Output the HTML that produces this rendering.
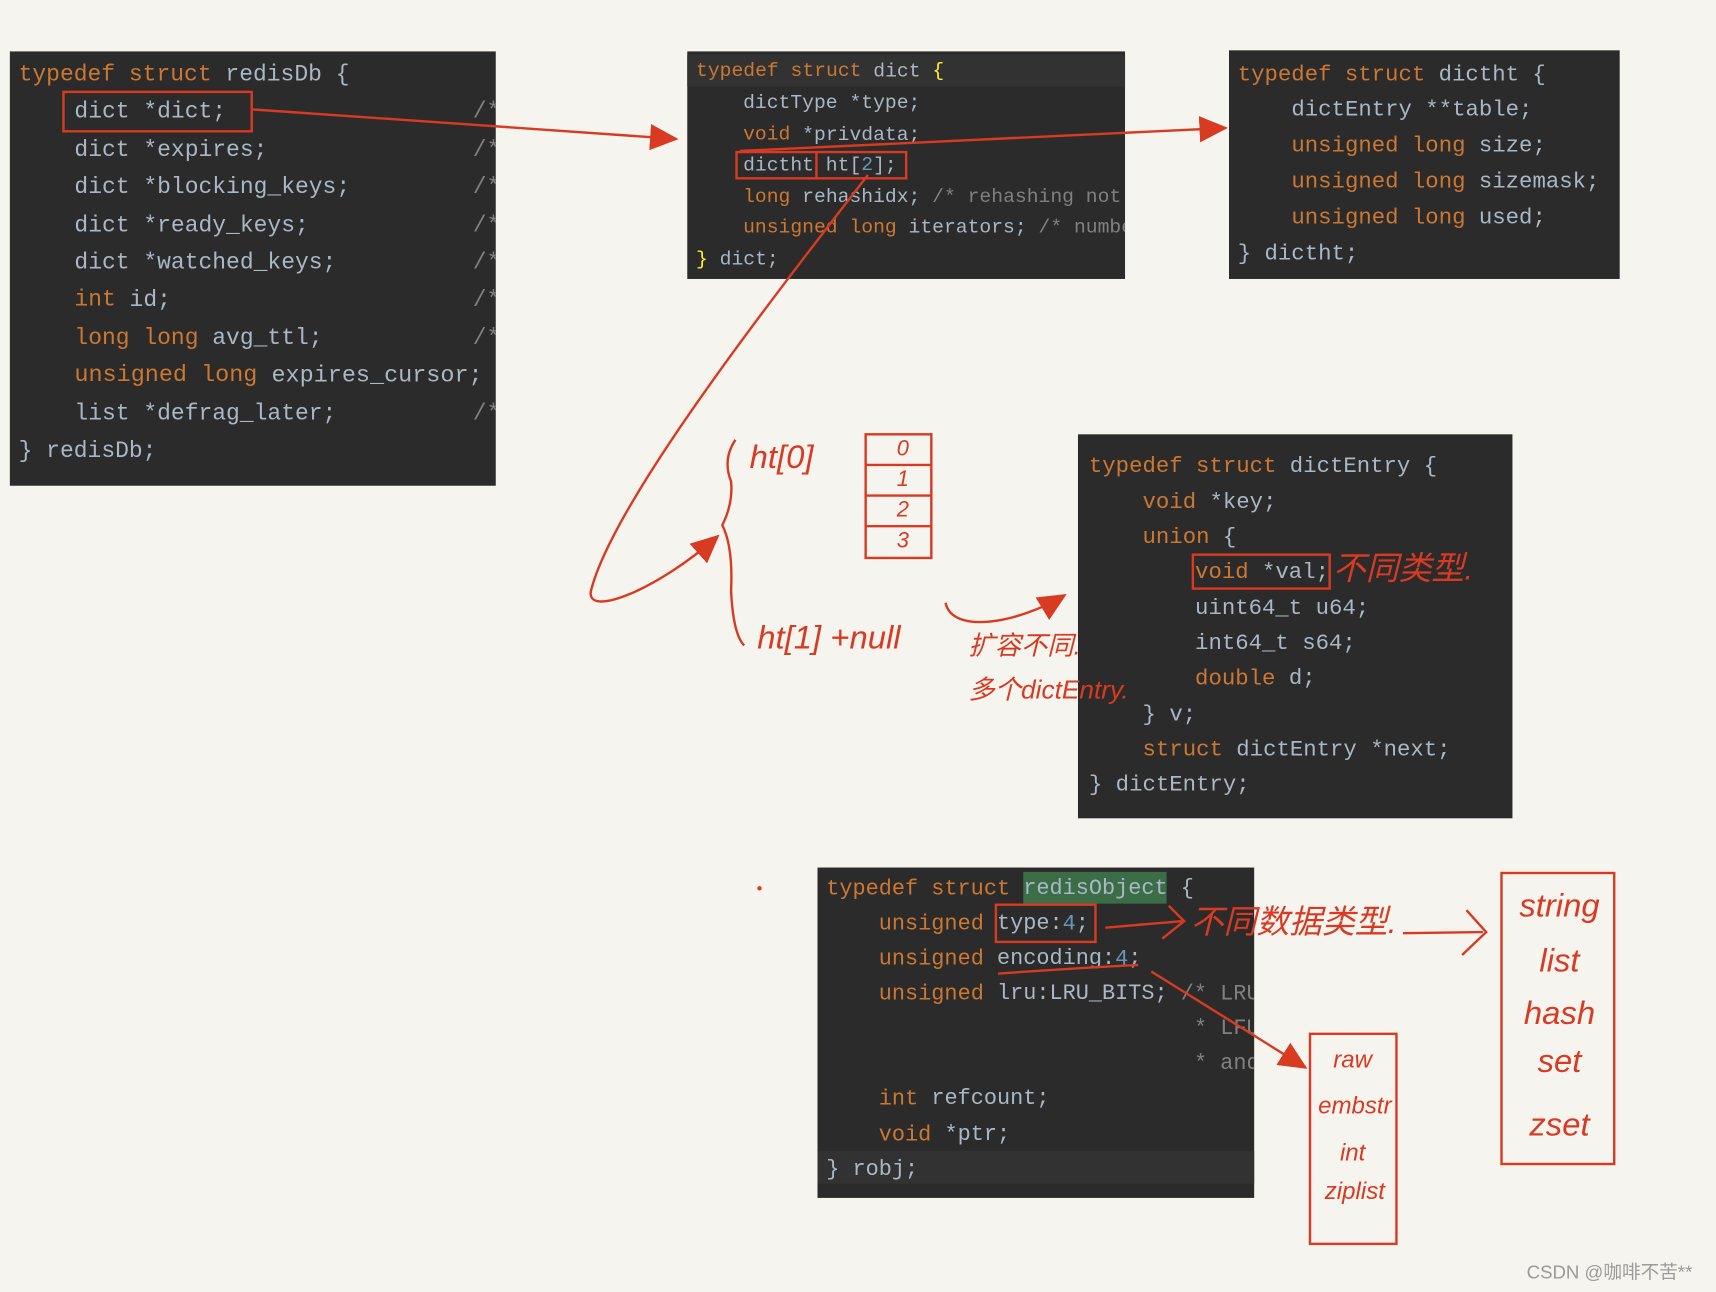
<!DOCTYPE html>
<html><head><meta charset="utf-8"><style>
html,body{margin:0;padding:0;background:#f6f4ef;}
svg{display:block}
.c{font-family:"Liberation Mono",monospace;fill:#a9b7c6;dominant-baseline:middle}
.k{fill:#cc7832}.m{fill:#808080}.n{fill:#6897bb}.y{fill:#ffef28}
.h{font-family:"Liberation Sans","Noto Sans CJK SC",sans-serif;fill:#d83a22;dominant-baseline:middle;font-style:italic}
.r{fill:none;stroke:#d83a22;stroke-width:2.2}
</style></head><body>
<svg width="1716" height="1292" viewBox="0 0 1568 1181" preserveAspectRatio="none" xmlns="http://www.w3.org/2000/svg">
<rect width="1568" height="1181" fill="#f6f4ef"/>
<defs>
<marker id="b" markerWidth="26" markerHeight="24" refX="24" refY="12" orient="auto" markerUnits="userSpaceOnUse"><path d="M0,0 L26,12 L0,24 z" fill="#d83a22"/></marker>
<clipPath id="cd"><rect x="628" y="47" width="400" height="208"/></clipPath>
<clipPath id="co"><rect x="747" y="793" width="399" height="302"/></clipPath>
<clipPath id="cr"><rect x="9" y="47" width="444" height="397"/></clipPath>
</defs>

<!-- redisDb -->
<rect x="9" y="47" width="444" height="397" fill="#2b2b2b"/>
<g class="c" font-size="21" clip-path="url(#cr)">
<text x="17" y="68"><tspan class="k">typedef struct</tspan> redisDb {</text>
<text x="68" y="102">dict *dict;</text>
<text x="68" y="137">dict *expires;</text>
<text x="68" y="171">dict *blocking_keys;</text>
<text x="68" y="206">dict *ready_keys;</text>
<text x="68" y="240">dict *watched_keys;</text>
<text x="68" y="274"><tspan class="k">int</tspan> id;</text>
<text x="68" y="309"><tspan class="k">long long</tspan> avg_ttl;</text>
<text x="68" y="343" textLength="373" lengthAdjust="spacingAndGlyphs"><tspan class="k">unsigned long</tspan> expires_cursor;</text>
<text x="68" y="378">list *defrag_later;</text>
<text x="17" y="412">} redisDb;</text>
<g class="m"><text x="432" y="102">/*</text><text x="432" y="137">/*</text><text x="432" y="171">/*</text><text x="432" y="206">/*</text><text x="432" y="240">/*</text><text x="432" y="274">/*</text><text x="432" y="309">/*</text><text x="432" y="378">/*</text></g>
</g>
<rect x="58" y="84" width="172" height="36" class="r"/>

<!-- dict -->
<rect x="628" y="47" width="400" height="208" fill="#2b2b2b"/>
<rect x="628" y="50" width="400" height="29" fill="#323232"/>
<g class="c" font-size="18" clip-path="url(#cd)">
<text x="636" y="65"><tspan class="k">typedef struct</tspan> dict <tspan class="y">{</tspan></text>
<text x="679" y="94">dictType *type;</text>
<text x="679" y="123"><tspan class="k">void</tspan> *privdata;</text>
<text x="679" y="151">dictht ht[<tspan class="n">2</tspan>];</text>
<text x="679" y="180"><tspan class="k">long</tspan> rehashidx; <tspan class="m">/* rehashing not</tspan></text>
<text x="679" y="208"><tspan class="k">unsigned long</tspan> iterators; <tspan class="m">/* numbe</tspan></text>
<text x="636" y="237"><tspan class="y">}</tspan> dict;</text>
</g>
<rect x="673" y="139" width="155" height="24" class="r"/><line x1="746" y1="139" x2="746" y2="163" class="r"/>

<!-- dictht -->
<rect x="1123" y="46" width="357" height="209" fill="#2b2b2b"/>
<g class="c" font-size="20.4">
<text x="1131" y="68"><tspan class="k">typedef struct</tspan> dictht {</text>
<text x="1180" y="100">dictEntry **table;</text>
<text x="1180" y="133"><tspan class="k">unsigned long</tspan> size;</text>
<text x="1180" y="166"><tspan class="k">unsigned long</tspan> sizemask;</text>
<text x="1180" y="199"><tspan class="k">unsigned long</tspan> used;</text>
<text x="1131" y="232">} dictht;</text>
</g>

<!-- dictEntry -->
<rect x="985" y="397" width="397" height="351" fill="#2b2b2b"/>
<g class="c" font-size="20.4">
<text x="995" y="426"><tspan class="k">typedef struct</tspan> dictEntry {</text>
<text x="1044" y="459"><tspan class="k">void</tspan> *key;</text>
<text x="1044" y="491"><tspan class="k">union</tspan> {</text>
<text x="1092" y="523"><tspan class="k">void</tspan> *val;</text>
<text x="1092" y="556">uint64_t u64;</text>
<text x="1092" y="588">int64_t s64;</text>
<text x="1092" y="620"><tspan class="k">double</tspan> d;</text>
<text x="1044" y="653">} v;</text>
<text x="1044" y="685"><tspan class="k">struct</tspan> dictEntry *next;</text>
<text x="995" y="717">} dictEntry;</text>
</g>
<rect x="1090" y="507" width="125" height="31" class="r"/>

<!-- redisObject -->
<rect x="747" y="793" width="399" height="302" fill="#2b2b2b"/>
<rect x="747" y="1052" width="399" height="30" fill="#323232"/>
<rect x="935" y="797" width="131" height="29" fill="#3b6e47"/>
<g class="c" font-size="20" clip-path="url(#co)">
<text x="755" y="812"><tspan class="k">typedef struct</tspan> redisObject {</text>
<text x="803" y="844"><tspan class="k">unsigned</tspan> type:<tspan class="n">4</tspan>;</text>
<text x="803" y="876"><tspan class="k">unsigned</tspan> encoding:<tspan class="n">4</tspan>;</text>
<text x="803" y="908"><tspan class="k">unsigned</tspan> lru:LRU_BITS; <tspan class="m">/* LRU</tspan></text>
<text x="1091" y="940" class="m">* LFU</text>
<text x="1091" y="972" class="m">* and</text>
<text x="803" y="1004"><tspan class="k">int</tspan> refcount;</text>
<text x="803" y="1037"><tspan class="k">void</tspan> *ptr;</text>
<text x="755" y="1069">} robj;</text>
</g>
<rect x="910" y="827" width="91" height="34" class="r"/>
<path d="M912,890 Q980,885 1040,882" class="r"/>

<!-- arrows -->
<path d="M231,100 L618,127" class="r" marker-end="url(#b)"/>
<path d="M676,138 L1120,117" class="r" marker-end="url(#b)"/>
<path d="M793,160 C700,280 560,460 540,540 C535,565 600,540 656,490" class="r" marker-end="url(#b)"/>
<path d="M864,551 C870,580 930,570 973,544" class="r" marker-end="url(#b)"/>
<path d="M1052,888 L1193,976" class="r" marker-end="url(#b)"/>
<path d="M1010,848 L1080,842 M1068,828 L1082,842 L1062,858" class="r"/>
<path d="M1282,853 L1355,852 M1340,832 L1358,852 L1336,873" class="r"/>

<!-- hand drawn -->
<path d="M672,402 Q660,420 668,440 Q670,460 660,480 Q670,500 668,540 Q670,580 680,590" class="r"/>
<text x="685" y="420" class="h" font-size="30">ht[0]</text>
<text x="692" y="585" class="h" font-size="30">ht[1] +null</text>
<rect x="791" y="397" width="60" height="113" class="r"/>
<line x1="791" y1="425" x2="851" y2="425" class="r"/><line x1="791" y1="453" x2="851" y2="453" class="r"/><line x1="791" y1="481" x2="851" y2="481" class="r"/>
<g class="h" font-size="20" text-anchor="middle"><text x="825" y="411">0</text><text x="825" y="439">1</text><text x="825" y="467">2</text><text x="825" y="495">3</text></g>
<text x="885" y="592" class="h" font-size="24">扩容不同.</text>
<text x="885" y="632" class="h" font-size="24">多个dictEntry.</text>
<text x="1218" y="522" class="h" font-size="30">不同类型.</text>
<text x="1088" y="845" class="h" font-size="30">不同数据类型.</text>
<rect x="1372" y="798" width="103" height="266" class="r"/>
<g class="h" font-size="30" text-anchor="middle"><text x="1425" y="830">string</text><text x="1425" y="880">list</text><text x="1425" y="928">hash</text><text x="1425" y="972">set</text><text x="1425" y="1030">zset</text></g>
<rect x="1197" y="945" width="79" height="192" class="r"/>
<g class="h" font-size="22" text-anchor="middle"><text x="1236" y="970">raw</text><text x="1238" y="1012">embstr</text><text x="1236" y="1055">int</text><text x="1238" y="1090">ziplist</text></g>
<circle cx="694" cy="812" r="2" fill="#d83a22"/>
<text x="1395" y="1164" font-family="Liberation Sans,'Noto Sans CJK SC',sans-serif" font-size="17" fill="#9a9a9a" dominant-baseline="middle">CSDN @咖啡不苦**</text>
</svg>
</body></html>
